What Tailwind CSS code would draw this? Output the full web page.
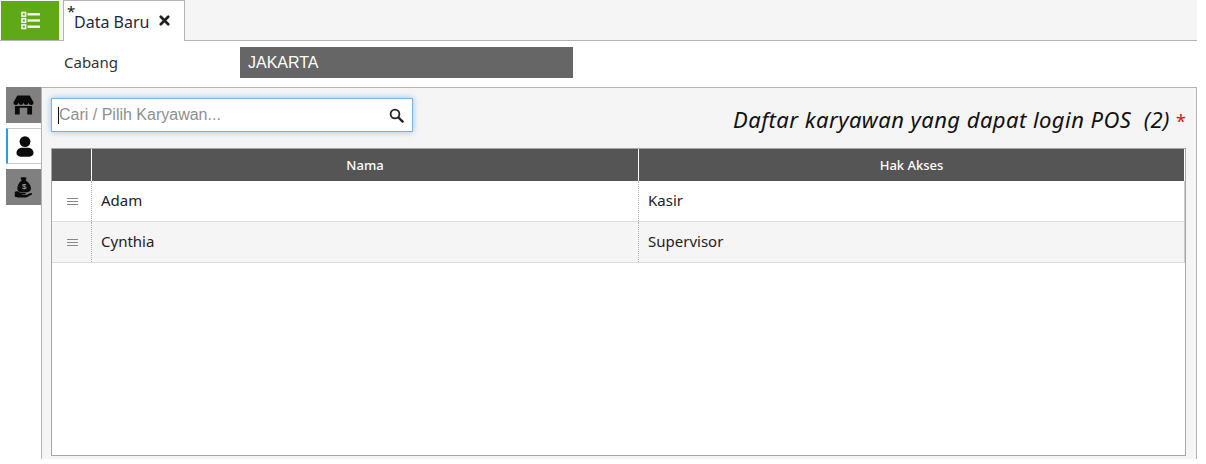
<!DOCTYPE html>
<html><head><meta charset="utf-8"><script src="https://cdn.jsdelivr.net/npm/@tailwindcss/browser@4"></script></head>
<body class="bg-white m-0 overflow-hidden">
<div class="w-[1206px] h-[464px] bg-white font-['Noto_Sans','Open_Sans',sans-serif] text-[#1a1a1a] overflow-hidden">
  <div class="w-[1197px]">
    <div class="h-[41px] bg-[#f5f5f5] border-b border-[#b4b4b4] flex items-start">
      <div class="mt-[1px] ml-[1px] w-[58px] h-[39px] bg-[#5fa817] flex items-center justify-center">
        <svg width="19" height="19" viewBox="0 0 19 19" fill="none">
          <g fill="none" stroke="#f1f7e8" stroke-width="1.6"><rect x="1" y="1.5" width="3.6" height="3.6"/><rect x="1" y="7.7" width="3.6" height="3.6"/><rect x="1" y="13.9" width="3.6" height="3.6"/></g>
          <g fill="#f1f7e8"><rect x="6.5" y="2.1" width="12.5" height="2.4"/><rect x="6.5" y="8.3" width="12.5" height="2.4"/><rect x="6.5" y="14.5" width="12.5" height="2.4"/></g>
        </svg>
      </div>
      <div class="relative ml-[4px] w-[122px] h-[41px] bg-white border-x border-t border-[#b4b4b4] flex items-center pl-[10px]">
        <span class="absolute left-[3px] top-[1px] text-[15px] leading-[18px]">*</span>
        <span class="text-[16px] leading-[20px] text-[#1f2937] mt-[1px]">Data Baru</span>
        <svg class="ml-[10px] -mt-[1px]" width="11" height="11" viewBox="0 0 11 11"><path d="M1.8 1.8 L9.2 9.2 M9.2 1.8 L1.8 9.2" stroke="#222" stroke-width="2.7" stroke-linecap="round"/></svg>
      </div>
    </div>
    <div class="h-[46px] flex items-start">
      <div class="w-[240px] pl-[64px] pt-[11px] text-[15px] leading-[20px] text-[#333]">Cabang</div>
      <div class="mt-[6px] w-[333px] h-[31px] bg-[#666666] text-white font-['Liberation_Sans',sans-serif] text-[16px] leading-[31px] pl-[8px]">JAKARTA</div>
    </div>
    <div class="flex h-[372px] items-stretch">
      <div class="w-[41px] flex flex-col relative">
        <div class="ml-[6px] w-[35px] h-[36px] bg-[#808080] flex items-center justify-center">
          <svg width="21" height="20" viewBox="0 0 22 21" fill="#0a0a0a"><path d="M4.5 0.5 H17.5 L21.5 7.5 A2.6 2.6 0 0 1 16.2 8 A2.6 2.6 0 0 1 11 8 A2.6 2.6 0 0 1 5.8 8 A2.6 2.6 0 0 1 0.5 7.5 Z"/><path d="M2 11.5 H20 V20.5 H15 V13.5 H7 V20.5 H2 Z"/></svg>
        </div>
        <div class="ml-[6px] mt-[5px] w-[35px] h-[36px] bg-white border-l-2 border-[#2f9ed8] border-y border-y-[#c8c8c8] relative z-10 flex items-center justify-center">
          <svg width="18" height="21" viewBox="0 0 18 21" fill="#0a0a0a"><circle cx="9" cy="5.6" r="5.4"/><path d="M0.5 17 C0.5 14 3 11.8 6 11.8 H12 C15 11.8 17.5 14 17.5 17 C17.5 19.5 15 20.8 12 20.8 H6 C3 20.8 0.5 19.5 0.5 17 Z"/></svg>
        </div>
        <div class="ml-[6px] mt-[5px] w-[35px] h-[36px] bg-[#808080] flex items-center justify-center">
          <svg width="19" height="21" viewBox="0 0 20 24"><path fill="#0a0a0a" d="M6.5 1 C8 0 12 0 13.5 1 L12.5 4 C16 6 18.5 9.5 18.5 13 C18.5 16 16 17.5 10.5 17.5 C5 17.5 3 16 3 13 C3 9.5 5 6 8 4 Z"/><path fill="#0a0a0a" d="M0 17 C2 15.7 4.5 16.5 6 18 H11.5 C13 18 13 20 11.5 20 H8 V20.6 H13 L18 18.4 C20 18 20.4 19.8 19.2 20.4 L13 23.5 H4 L0 22.5 Z"/><text x="10.7" y="13.5" text-anchor="middle" font-size="9" fill="#bdbdbd" font-family="Liberation Sans">$</text></svg>
        </div>
      </div>
      <div class="w-[1156px] bg-[#f5f5f5] border-t border-x border-[#b4b4b4] pl-[9px] pr-[10px] flex flex-col">
        <div class="h-[60px] flex items-start justify-between">
          <div class="mt-[10px] w-[362px] h-[34px] bg-white border border-[#7fb2dc] shadow-[0_0_6px_rgba(90,165,230,0.65)] flex items-center pl-[6px] pr-[8px]">
            <span class="w-px h-[17px] bg-[#111]"></span>
            <span class="flex-1 font-['Liberation_Sans',sans-serif] text-[16px] text-[#8f8f8f] leading-[20px] -mt-[1px]">Cari / Pilih Karyawan...</span>
            <svg width="15" height="15" viewBox="0 0 15 15" fill="none" stroke="#222"><circle cx="6" cy="6" r="4.4" stroke-width="1.8"/><path d="M9.5 9.5 L13.6 13.6" stroke-width="2.4" stroke-linecap="round"/></svg>
          </div>
          <div class="mt-[17px] text-[22px] leading-[28px] italic text-[#111] whitespace-pre tracking-[0.45px]">Daftar karyawan yang dapat login POS  (2) <span class="text-[#e01010] not-italic text-[18px] tracking-normal">*</span></div>
        </div>
        <div class="h-[308px] w-[1135px] bg-white border border-[#a6a6a6] flex flex-col">
          <div class="h-[32px] bg-[#555555] flex text-white text-[13px] font-medium leading-[32px] text-center border-r border-r-white">
            <div class="w-[40px] border-r border-white"></div>
            <div class="w-[547px] border-r border-white">Nama</div>
            <div class="flex-1">Hak Akses</div>
          </div>
          <div class="h-[41px] flex border-b border-[#dddddd] bg-white text-[15px] text-[#222] leading-[38px] border-r border-r-[#cccccc]">
            <div class="w-[40px] border-r border-dotted border-[#b0b0b0] flex items-center justify-center pl-[1px] pt-[2px]"><svg width="11" height="8" viewBox="0 0 11 8"><path d="M0 .5H11M0 3.5H11M0 6.5H11" stroke="#888" stroke-width="1"/></svg></div>
            <div class="w-[547px] border-r border-dotted border-[#b0b0b0] pl-[9px]">Adam</div>
            <div class="flex-1 pl-[9px]">Kasir</div>
          </div>
          <div class="h-[41px] flex border-b border-[#dddddd] bg-[#f5f5f5] text-[15px] text-[#222] leading-[38px] border-r border-r-[#cccccc]">
            <div class="w-[40px] border-r border-dotted border-[#b0b0b0] flex items-center justify-center pl-[1px] pt-[2px]"><svg width="11" height="8" viewBox="0 0 11 8"><path d="M0 .5H11M0 3.5H11M0 6.5H11" stroke="#888" stroke-width="1"/></svg></div>
            <div class="w-[547px] border-r border-dotted border-[#b0b0b0] pl-[9px]">Cynthia</div>
            <div class="flex-1 pl-[9px]">Supervisor</div>
          </div>
        </div>
      </div>
    </div>
  </div>
</div>
</body></html>
